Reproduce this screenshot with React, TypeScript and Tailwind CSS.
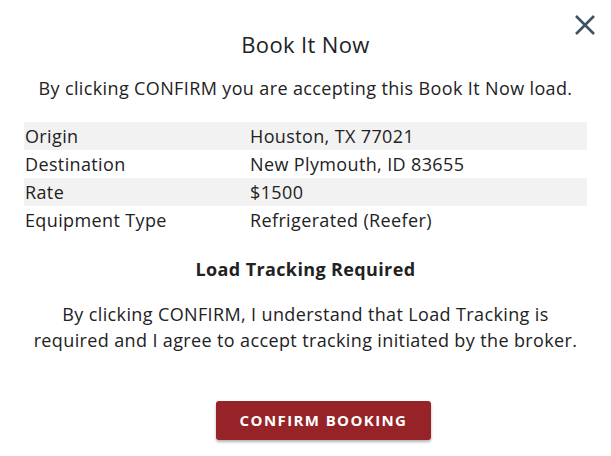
import React from 'react';

const rows = [
  { label: 'Origin', value: 'Houston, TX 77021' },
  { label: 'Destination', value: 'New Plymouth, ID 83655' },
  { label: 'Rate', value: '$1500' },
  { label: 'Equipment Type', value: 'Refrigerated (Reefer)' },
];

export default function App() {
  return (
    <div className="relative w-[611px] h-[456px] bg-white text-[#222] font-['Open_Sans',sans-serif] tracking-[0.37px]">
      <button className="absolute right-[14px] top-[13px] w-6 h-6 flex items-center justify-center text-[#3f5265]">
        <svg width="22" height="22" viewBox="0 0 22 22" fill="none" stroke="currentColor" strokeWidth="2.6">
          <path d="M2 2 L20 20 M20 2 L2 20" />
        </svg>
      </button>
      <div className="flex flex-col items-center pt-[30px] px-6">
        <h2 className="text-[22px] leading-7 tracking-[0.35px]">Book It Now</h2>
        <p className="mt-[18px] text-[18px] leading-6">By clicking CONFIRM you are accepting this Book It Now load.</p>
        <div className="mt-[22px] w-full flex flex-col text-[18px]">
          {rows.map((r, i) => (
            <div key={r.label} className={'flex h-[28px] items-center ' + (i % 2 === 0 ? 'bg-[#f2f2f2]' : '')}>
              <span className="w-[226px] pl-[1px]">{r.label}</span>
              <span>{r.value}</span>
            </div>
          ))}
        </div>
        <h3 className="mt-[23px] text-[18px] font-bold leading-6">Load Tracking Required</h3>
        <p className="mt-[20px] text-[18px] leading-[26px] text-center">
          By clicking CONFIRM, I understand that Load Tracking is<br />
          required and I agree to accept tracking initiated by the broker.
        </p>
        <button className="mt-[48px] ml-[36px] w-[215px] h-[39px] rounded-[3px] bg-[#952327] text-white text-[15px] font-bold tracking-[1.4px] shadow-[0_2px_3px_rgba(0,0,0,0.3)]">
          CONFIRM BOOKING
        </button>
      </div>
    </div>
  );
}
